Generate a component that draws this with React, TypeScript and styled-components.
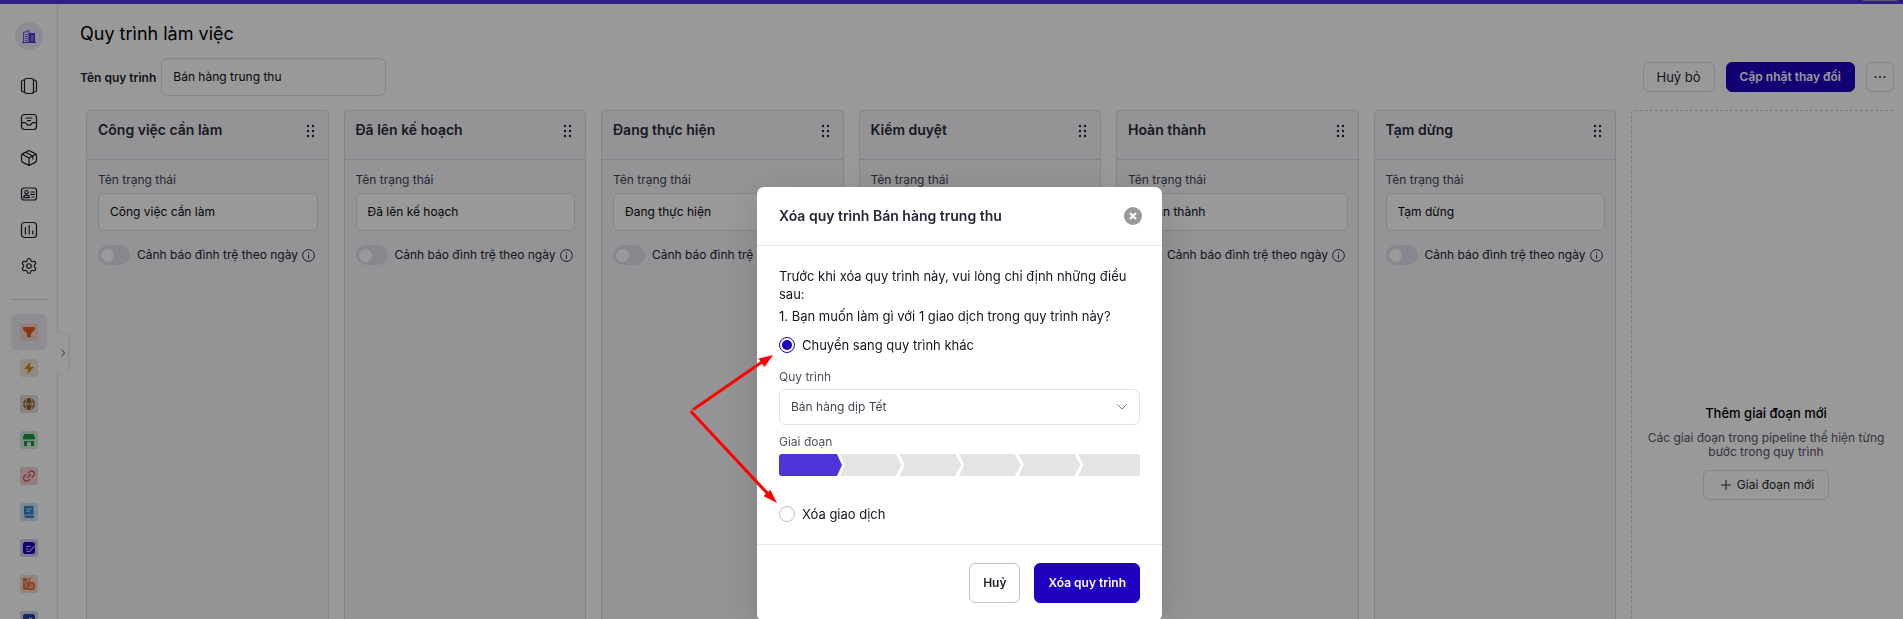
import React from "react";
import styled, { createGlobalStyle, css } from "styled-components";
import { Settings } from "lucide-react";

const GlobalStyle = createGlobalStyle`
  *, *::before, *::after { box-sizing: border-box; }
  html, body { margin: 0; height: 100%; overflow: hidden; }
  body, button, input, select {
    font-family: Inter, "Liberation Sans", sans-serif;
    font-size: 13px;
    color: #0b0b12;
  }
  button { cursor: pointer; }
  h1, h2, h3, p { margin: 0; }
`;

const Page = styled.div`
  height: 100vh;
  display: flex;
  flex-direction: column;
  overflow: hidden;
  background: #fff;
`;

const TopBar = styled.div`
  flex: 0 0 4px;
  display: flex;
  justify-content: flex-end;
  align-items: flex-start;
  padding-right: 6px;
  background: #4f35d9;
`;

const TopBarTab = styled.span`
  width: 34px;
  height: 1px;
  background: #9a9aa5;
`;

const Shell = styled.div`
  flex: 1;
  min-height: 0;
  display: flex;
`;

const Sidebar = styled.nav`
  position: relative;
  flex: 0 0 58px;
  display: flex;
  flex-direction: column;
  align-items: center;
  padding-top: 18px;
  border-right: 1px solid #e4e4ea;
`;

const Avatar = styled.a`
  display: grid;
  place-items: center;
  flex: none;
  width: 28px;
  height: 28px;
  margin-bottom: 18px;
  border-radius: 50%;
  background: #ebe9f6;
`;

const NavItem = styled.a<{ $active?: boolean }>`
  display: grid;
  place-items: center;
  flex: none;
  width: 36px;
  height: 36px;
  border-radius: 6px;
  color: #1b1b2a;
  background: ${(p) => (p.$active ? "#edebf7" : "transparent")};
`;

const NavDivider = styled.hr`
  width: 36px;
  height: 1px;
  margin: 15px 0 14px;
  border: 0;
  flex: none;
  background: #d8d8de;
`;

const Tile = styled.span<{ $bg: string }>`
  display: grid;
  place-items: center;
  width: 18px;
  height: 18px;
  border-radius: 3px;
  background: ${(p) => p.$bg};
`;

const CollapseButton = styled.button`
  position: absolute;
  top: 329px;
  left: 57px;
  display: grid;
  place-items: center;
  width: 11px;
  height: 39px;
  padding: 0;
  border: 0;
  border-radius: 0 6px 6px 0;
  background: #fff;
  box-shadow: 1px 0 3px rgba(0, 0, 0, 0.1);
`;

const Main = styled.main`
  flex: 1;
  min-width: 0;
  padding: 18px 9px 0 22px;
  overflow: hidden;
`;

const Title = styled.h1`
  font-size: 18px;
  line-height: 24px;
  font-weight: 400;
  color: #000;
`;

const Toolbar = styled.div`
  display: flex;
  align-items: center;
  gap: 11px;
  margin: 12px 0 14px;
`;

const NameField = styled.label`
  display: flex;
  align-items: center;
  gap: 5px;
  margin-right: auto;
  font-size: 12px;
  font-weight: 600;
  color: #22222f;
`;

const TextInput = styled.input`
  display: block;
  width: 100%;
  height: 38px;
  padding: 0 11px 1px;
  border: 1px solid #dddde9;
  border-radius: 6px;
  background: #fff;
  font-size: 12px;
  outline: none;
`;

const NameInput = styled(TextInput)`
  width: 225px;
`;

const Button = styled.button<{ $primary?: boolean; $large?: boolean }>`
  display: inline-flex;
  align-items: center;
  justify-content: center;
  gap: 6px;
  height: ${(p) => (p.$large ? 40 : 30)}px;
  padding: 0 13px 1px;
  border-radius: 6px;
  font-size: 12px;
  white-space: nowrap;
  border: 1px solid #dddde9;
  background: #fff;
  color: #1f1f2c;
  ${(p) =>
    p.$large &&
    css`
      border-color: #bfbfdb;
      font-weight: 600;
    `}
  ${(p) =>
    p.$primary &&
    css`
      border-color: #1d00c0;
      background: #1d00c0;
      color: #fff;
      font-weight: 600;
    `}
`;

const ToolButton = styled(Button)`
  font-size: 13px;
`;

const MoreButton = styled(Button)`
  width: 28px;
  padding: 0;
`;

const StageButton = styled(Button)`
  padding: 0 14px 1px 17px;
`;

const Board = styled.div`
  display: grid;
  grid-template-columns: repeat(6, minmax(0, 1fr)) 263px;
  gap: 15px;
  height: 684px;
  padding-left: 6px;
  overflow: hidden;
`;

const Column = styled.section`
  border: 1px solid #dddde7;
  border-radius: 4px;
  background: #f7f7fc;
`;

const ColumnHeader = styled.header`
  display: flex;
  justify-content: space-between;
  align-items: flex-start;
  height: 49px;
  padding: 9px 13px 0 11px;
  border-bottom: 1px solid #dddde7;
`;

const ColumnTitle = styled.h2`
  font-size: 14px;
  line-height: 20px;
  font-weight: 600;
  color: #2a2a3c;
`;

const ColumnBody = styled.div`
  padding: 11px 10px 0 11px;
`;

const StateField = styled.label`
  display: flex;
  flex-direction: column;
  gap: 4px;
  font-size: 12px;
  line-height: 18px;
  color: #42424f;
`;

const AlertRow = styled.div`
  display: flex;
  align-items: center;
  margin-top: 14px;
  white-space: nowrap;
  & > svg {
    flex: none;
  }
`;

const SwitchLabel = styled.label`
  display: flex;
  align-items: center;
  gap: 7px;
  margin-right: 4px;
  font-size: 12px;
  line-height: 20px;
  color: #22222f;
`;

const Switch = styled.input`
  appearance: none;
  display: flex;
  align-items: center;
  flex: none;
  width: 32px;
  height: 20px;
  margin: 0;
  padding: 0 3px;
  border-radius: 10px;
  background: #e2e2ee;
  &::before {
    content: "";
    width: 13px;
    height: 13px;
    border-radius: 50%;
    background: #fff;
  }
  &:checked {
    justify-content: flex-end;
    background: #1d00c0;
  }
`;

const NewStage = styled.section`
  display: flex;
  flex-direction: column;
  align-items: center;
  justify-content: center;
  width: 270px;
  border: 1px dashed #cfcfd6;
  border-radius: 4px;
  text-align: center;
`;

const NewStageTitle = styled.h3`
  font-size: 13px;
  line-height: 18px;
  font-weight: 500;
  color: #000;
`;

const NewStageText = styled.p`
  width: 240px;
  margin: 9px 0 11px;
  font-size: 12px;
  line-height: 14px;
  color: #55556b;
`;

const Overlay = styled.div`
  position: fixed;
  inset: 0;
  display: flex;
  justify-content: center;
  align-items: flex-start;
  padding: 187px 0 0 16px;
  overflow: hidden;
  background: rgba(0, 0, 0, 0.4);
`;

const Dialog = styled.div`
  position: relative;
  width: 405px;
  border-radius: 7px;
  background: #fff;
  box-shadow: 0 10px 40px rgba(0, 0, 0, 0.14);
`;

const DialogHeader = styled.header`
  display: flex;
  align-items: center;
  justify-content: space-between;
  height: 59px;
  padding: 0 20px 0 22px;
  border-bottom: 1px solid #e6e6ea;
`;

const DialogTitle = styled.h2`
  font-size: 14px;
  line-height: 20px;
  font-weight: 600;
  color: #272735;
`;

const CloseButton = styled.button`
  display: grid;
  place-items: center;
  width: 18px;
  height: 18px;
  padding: 0;
  border: 0;
  border-radius: 50%;
  background: #999;
`;

const DialogBody = styled.div`
  padding: 21px 22px 20px;
`;

const Paragraph = styled.p`
  margin-bottom: 4px;
  font-size: 13px;
  line-height: 18px;
  color: #15151f;
`;

const RadioLabel = styled.label`
  display: flex;
  align-items: center;
  gap: 7px;
  height: 20px;
  font-size: 13px;
  color: #15151f;
`;

const Radio = styled.input`
  appearance: none;
  display: grid;
  place-items: center;
  width: 16px;
  height: 16px;
  margin: 0;
  border: 1px solid #bcbcd8;
  border-radius: 50%;
  background: #fff;
  &:checked {
    border-color: #1d00c0;
  }
  &:checked::before {
    content: "";
    width: 10px;
    height: 10px;
    border-radius: 50%;
    background: #1d00c0;
  }
`;

const Options = styled.div`
  display: flex;
  flex-direction: column;
  padding-top: 6px;
`;

const FieldLabel = styled.label`
  display: block;
  font-size: 12px;
  line-height: 18px;
  color: #50505e;
`;

const MoveFields = styled.div`
  display: flex;
  flex-direction: column;
  padding: 13px 0 28px;
`;

const SelectBox = styled.div`
  display: grid;
  align-items: center;
  margin: 3px 0 8px;
  & > * {
    grid-area: 1 / 1;
  }
  & > svg {
    justify-self: end;
    margin-right: 13px;
    pointer-events: none;
  }
`;

const Select = styled.select`
  appearance: none;
  width: 100%;
  height: 36px;
  padding: 0 30px 1px 11px;
  border: 1px solid #e0e0ee;
  border-radius: 6px;
  background: #fff;
  font-size: 12px;
  color: #444452;
`;

const Stages = styled.div`
  display: flex;
  height: 22px;
  margin-top: 3px;
  border-radius: 3px;
  overflow: hidden;
`;

const Stage = styled.button<{ $on?: boolean }>`
  flex: 1;
  margin: 0 -1px 0 0;
  padding: 0;
  border: 0;
  background: ${(p) => (p.$on ? "#4f35d9" : "#e4e4e4")};
  clip-path: polygon(0 0, calc(100% - 6px) 0, 100% 50%, calc(100% - 6px) 100%, 0 100%, 5px 50%);
  &:not(:first-child) {
    margin-left: -1px;
  }
  &:first-child {
    flex: 0 0 63px;
    clip-path: polygon(0 0, calc(100% - 5px) 0, 100% 50%, calc(100% - 5px) 100%, 0 100%);
  }
  &:last-child {
    margin-right: 0;
    clip-path: polygon(0 0, 100% 0, 100% 100%, 0 100%, 5px 50%);
  }
`;

const DialogFooter = styled.footer`
  display: flex;
  justify-content: flex-end;
  gap: 14px;
  padding: 18px 22px;
  border-top: 1px solid #e6e6ea;
`;

const Arrows = styled.svg`
  position: absolute;
  top: 163px;
  left: -72px;
  pointer-events: none;
`;

const stroke = {
  fill: "none",
  stroke: "currentColor",
  strokeWidth: 1.2,
  strokeLinecap: "round" as const,
  strokeLinejoin: "round" as const,
};

const Icon = ({ children }: { children: React.ReactNode }) => (
  <svg width="18" height="18" viewBox="0 0 18 18" {...stroke} aria-hidden="true">
    {children}
  </svg>
);

const menu: [string, React.ReactNode][] = [
  ["Bảng", <Icon><rect x="4.5" y="1.5" width="9" height="15" rx="2" /><path d="M4.5 3H3.4A2 2 0 0 0 1.5 5v8a2 2 0 0 0 1.9 2h1.1M13.5 3h1.1A2 2 0 0 1 16.500 5v8a2 2 0 0 1-1.900 2h-1.100" /></Icon>],
  ["Hộp thư", <Icon><rect x="1.5" y="1.5" width="15" height="15" rx="3" /><path d="M1.5 9.700h3.300c1 0 1.500.7 1.900 1.400.5.900 1.300 1.100 2.300 1.100s1.800-.2 2.300-1.100c.4-.7.900-1.400 1.900-1.400h3.300M6 5h6M7.500 7.700h3" /></Icon>],
  ["Sản phẩm", <Icon><path d="M9 1.5l6.700 3.400.8 1.300v5.600l-.8 1.300L9 16.500l-6.700-3.400-.8-1.300V6.200l.8-1.300L9 1.500zM2 5.300L9 9l7-3.700M9 9v7.300M5.500 3.300L12.800 7v3" /></Icon>],
  ["Liên hệ", <Icon><rect x="1.5" y="3" width="15" height="12" rx="2.5" /><circle cx="6.5" cy="7.2" r="1.7" /><path d="M3.700 12.700c0-1.800 1.200-2.500 2.800-2.500s2.800.7 2.800 2.500zM10.800 7h3.500M10.800 9.400h3.500M11.800 12h2.500" /></Icon>],
  ["Báo cáo", <Icon><rect x="1.5" y="1.5" width="15" height="15" rx="3" /><path d="M5.400 6.500v6.500M9.200 4.700V13M12.800 9.800V13" /></Icon>],
  ["Cài đặt", <Settings size={18} strokeWidth={1.5} aria-hidden="true" />],
];

const apps: [string, string, React.ReactNode][] = [
  ["Bán hàng", "#f3d6cf", <g fill="#ea5b1c"><path d="M0 1h12v2.500L8 7.500V11l-4 .5v-4L0 3.500z" /></g>],
  ["Tự động hoá", "#f3e6d2", <g fill="#d6850f"><path d="M7.500 0L1 7h4.200L4.500 12 11 5H6.800z" /></g>],
  ["Trang web", "#e4dbd4", <g fill="none" stroke="#95602f" strokeWidth="1"><circle cx="6" cy="6" r="5.5" fill="#95602f" /><path stroke="#e4dbd4" d="M0 6h12M4 .5C2.300 4 2.300 8 4 11.500M8 .5c1.700 3.500 1.700 7.500 0 11" /></g>],
  ["Cửa hàng", "#d3eadb", <g fill="#159a43"><path d="M1.500 0h9L12 3v2q-1 1.500-2 0-1 1.500-2 0-1 1.500-2 0-1 1.500-2 0-1 1.500-2 0-1 1.500-2 0V3zM1 7h10v5H8V9.500a2 2 0 0 0-4 0V12H1z" /></g>],
  ["Liên kết", "#f1d3d6", <g fill="none" stroke="#d0474f" strokeWidth="1.2" strokeLinecap="round"><path d="M5.500 2.800l1.300-1.400a2.900 2.900 0 0 1 4 4.100L9 7.300M6.500 9.300l-1.300 1.300a2.900 2.900 0 0 1-4-4.100L3 4.700M4.500 7.500l3-3" /></g>],
  ["Tài liệu", "#d3e3ef", <g fill="#2c84d0"><path d="M1.500 0H10.500V8.500H1V1z" /><path d="M1 9.500h10V12H2z" /><path stroke="#d3e3ef" d="M3 3h6M3 5.300h4" /></g>],
  ["Biểu mẫu", "#d3cdec", <><rect x="0" y="0" width="12" height="12" rx="2.5" fill="#1d00c0" /><path d="M3.500 4.500h4M3 7h2.500M3.500 9.500h3l5-5.500" fill="none" stroke="#d3cdec" strokeWidth="1.1" /></>],
  ["Bán lẻ", "#f3dbd0", <><path d="M0 0h8L7 4h3q2 0 2 2v4q0 2-2 2H2q-2 0-2-2z" fill="#ee763f" /><path d="M.5 3L3 5.500V9M4.500 0v4L7 1M7 7h3M5.500 9.300H10" fill="none" stroke="#f3dbd0" strokeWidth="1" /></>],
  ["Công việc", "#d3d9e9", <><rect x="0" y="0" width="12" height="12" rx="2" fill="#1c43a6" /><path d="M2.500 5l2.500 2 2-3 2.500 1" fill="none" stroke="#d3d9e9" strokeWidth="1.2" /></>],
];

const columns = ["Công việc cần làm", "Đã lên kế hoạch", "Đang thực hiện", "Kiểm duyệt", "Hoàn thành", "Tạm dừng"];

const GripButton = styled.button`
  display: flex;
  margin-top: 4px;
  padding: 0;
  border: 0;
  background: none;
`;

const Grip = () => (
  <GripButton aria-label="Kéo">
    <svg width="10" height="14" viewBox="0 0 10 14" fill="#22222f">
      {[2, 7, 12].map((y) => (
        <React.Fragment key={y}>
          <circle cx="3" cy={y} r="1.2" />
          <circle cx="8" cy={y} r="1.2" />
        </React.Fragment>
      ))}
    </svg>
  </GripButton>
);

const InfoIcon = () => (
  <svg width="13" height="13" viewBox="0 0 13 13" fill="none" stroke="#2c3140" role="img" aria-label="Thông tin">
    <circle cx="6.5" cy="6.5" r="5.9" />
    <path d="M6.5 5.700v4M6.500 3.200v1.200" />
  </svg>
);

function StatusColumn({ name }: { name: string }) {
  return (
    <Column>
      <ColumnHeader>
        <ColumnTitle>{name}</ColumnTitle>
        <Grip />
      </ColumnHeader>
      <ColumnBody>
        <StateField>
          Tên trạng thái
          <TextInput defaultValue={name} />
        </StateField>
        <AlertRow>
          <SwitchLabel>
            <Switch type="checkbox" role="switch" />
            Cảnh báo đình trệ theo ngày
          </SwitchLabel>
          <InfoIcon />
        </AlertRow>
      </ColumnBody>
    </Column>
  );
}

function DeleteDialog() {
  return (
    <Dialog role="dialog" aria-modal="true" aria-labelledby="dialog-title">
      <DialogHeader>
        <DialogTitle id="dialog-title">Xóa quy trình Bán hàng trung thu</DialogTitle>
        <CloseButton aria-label="Đóng">
          <svg width="8" height="8" viewBox="0 0 8 8" stroke="#fff" strokeWidth="2">
            <path d="M1 1l6 6M7 1L1 7" />
          </svg>
        </CloseButton>
      </DialogHeader>
      <DialogBody>
        <Paragraph>Trước khi xóa quy trình này, vui lòng chỉ định những điều sau:</Paragraph>
        <Paragraph>1. Bạn muốn làm gì với 1 giao dịch trong quy trình này?</Paragraph>
        <Options>
          <RadioLabel>
            <Radio type="radio" name="action" defaultChecked />
            Chuyển sang quy trình khác
          </RadioLabel>
          <MoveFields>
            <FieldLabel htmlFor="pipeline">Quy trình</FieldLabel>
            <SelectBox>
              <Select id="pipeline" defaultValue="tet">
                <option value="tet">Bán hàng dịp Tết</option>
              </Select>
              <svg width="10" height="6" viewBox="0 0 10 6" fill="none" stroke="#777785">
                <path d="M0.5 0.5L5 5l4.500-4.500" />
              </svg>
            </SelectBox>
            <FieldLabel as="span" id="stage-label">Giai đoạn</FieldLabel>
            <Stages role="group" aria-labelledby="stage-label">
              {columns.map((name, i) => (
                <Stage key={name} type="button" $on={i === 0} aria-label={name} />
              ))}
            </Stages>
          </MoveFields>
          <RadioLabel>
            <Radio type="radio" name="action" />
            Xóa giao dịch
          </RadioLabel>
        </Options>
      </DialogBody>
      <DialogFooter>
        <Button $large>Huỷ</Button>
        <Button $large $primary>Xóa quy trình</Button>
      </DialogFooter>
      <Arrows width="100" height="160" viewBox="685 350 100 160" fill="#fe0000" aria-hidden="true">
        <path d="M694 409L762 362M691.500 412L768 494" stroke="#fe0000" strokeWidth="3" strokeLinecap="round" />
        <path d="M773 355L758.500 358.500L764.500 367zM777 503L763.500 496L770.500 490z" />
      </Arrows>
    </Dialog>
  );
}

export default function App() {
  return (
    <>
      <GlobalStyle />
      <Page>
        <TopBar><TopBarTab /></TopBar>
        <Shell>
          <Sidebar>
            <Avatar href="#" aria-label="Công ty">
              <svg width="14" height="13" viewBox="0 0 14 13" aria-hidden="true">
                <path d="M1.500 12V2.500L7 .5V12" fill="#d9d4f4" stroke="#6a55dd" />
                <path d="M3 4.500h3M3 6.500h3M3 8.500h3M3 10.500h3" stroke="#6a55dd" strokeWidth="0.8" />
                <path d="M7 3h6v9H7zM0 12h14v1H0z" fill="#4f35d9" />
                <path d="M9 6h2.500M9 8h2.500M9 10h2.500" stroke="#d6d0f5" strokeWidth="0.9" />
              </svg>
            </Avatar>
            {menu.map(([label, art]) => (
              <NavItem key={label} href="#" aria-label={label}>{art}</NavItem>
            ))}
            <NavDivider />
            {apps.map(([label, bg, art], i) => (
              <NavItem key={label} href="#" aria-label={label} $active={i === 0}>
                <Tile $bg={bg}>
                  <svg width="12" height="12" viewBox="0 0 12 12" aria-hidden="true">{art}</svg>
                </Tile>
              </NavItem>
            ))}
            <CollapseButton aria-label="Mở rộng">
              <svg width="4" height="8" viewBox="0 0 4 8" fill="none" stroke="#666">
                <path d="M.5 .5L3.500 4L.5 7.500" />
              </svg>
            </CollapseButton>
          </Sidebar>
          <Main>
            <Title>Quy trình làm việc</Title>
            <Toolbar>
              <NameField>
                Tên quy trình
                <NameInput defaultValue="Bán hàng trung thu" />
              </NameField>
              <ToolButton>Huỷ bỏ</ToolButton>
              <Button $primary>Cập nhật thay đổi</Button>
              <MoreButton aria-label="Thêm">
                <svg width="12" height="4" viewBox="0 0 12 4" fill="#22222f">
                  <circle cx="1.5" cy="2" r="1" /><circle cx="6" cy="2" r="1" /><circle cx="10.5" cy="2" r="1" />
                </svg>
              </MoreButton>
            </Toolbar>
            <Board>
              {columns.map((name) => <StatusColumn key={name} name={name} />)}
              <NewStage>
                <NewStageTitle>Thêm giai đoạn mới</NewStageTitle>
                <NewStageText>Các giai đoạn trong pipeline thể hiện từng bước trong quy trình</NewStageText>
                <StageButton>
                  <svg width="10" height="10" viewBox="0 0 10 10" stroke="#22303c"><path d="M5 0v10M0 5h10" /></svg>
                  Giai đoạn mới
                </StageButton>
              </NewStage>
            </Board>
          </Main>
        </Shell>
      </Page>
      <Overlay>
        <DeleteDialog />
      </Overlay>
    </>
  );
}
